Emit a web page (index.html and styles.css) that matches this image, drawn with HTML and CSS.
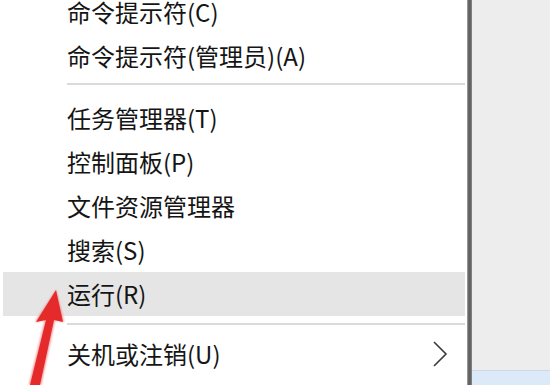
FILE: index.html
```html
<!DOCTYPE html>
<html lang="zh-CN">
<head>
<meta charset="utf-8">
<title>Win+X 菜单</title>
<link rel="stylesheet" href="styles.css">
</head>
<body>
<div class="screen">
  <div class="menu">
    <ul class="list">
      <li class="item item-first">命令提示符(C)</li>
      <li class="item">命令提示符(管理员)(A)</li>
      <li class="sep sep-first"></li>
      <li class="item">任务管理器(T)</li>
      <li class="item">控制面板(P)</li>
      <li class="item">文件资源管理器</li>
      <li class="item">搜索(S)</li>
      <li class="item active">运行(R)</li>
      <li class="sep sep-last"></li>
      <li class="item has-sub">关机或注销(U)
        <svg class="chev" width="16" height="28" viewBox="0 0 16 28"><path d="M2 2 L14 14 L2 26" fill="none" stroke="#3a3a3a" stroke-width="1.6"/></svg>
      </li>
    </ul>
  </div>
  <div class="edge"></div>
  <div class="desk">
    <div class="desk-fill"></div>
    <div class="desk-bar"></div>
  </div>
  <svg class="arrow" width="80" height="125" viewBox="0 0 80 125">
    <defs>
      <filter id="glow" x="-30%" y="-30%" width="160%" height="160%">
        <feGaussianBlur stdDeviation="1.2"/>
      </filter>
    </defs>
    <polygon points="56,30 64,62 55,60 41,125 29,125 45,60 35,62" fill="#f05a5a" filter="url(#glow)" opacity="0.7"/>
    <polygon points="56,30 63,62 54,60 40,125 30,125 46,60 36,62" fill="#e42a2a"/>
  </svg>
</div>
</body>
</html>
```
FILE: styles.css
```css
html, body {
  margin: 0;
  padding: 0;
  background: #ffffff;
}
.screen {
  position: relative;
  width: 550px;
  height: 385px;
  overflow: hidden;
  display: flex;
  font-family: "Noto Sans CJK SC", "Microsoft YaHei", sans-serif;
}
.menu {
  width: 467px;
  background: #ffffff;
  flex: none;
}
.list {
  list-style: none;
  margin: 0 2px 0 3px;
  padding: 0;
}
.item {
  height: 44px;
  line-height: 44px;
  padding-left: 64px;
  font-size: 24px;
  color: #151515;
  display: flex;
  align-items: center;
  white-space: nowrap;
}
.item-first {
  height: 24px;
  line-height: 24px;
  margin-bottom: 10px;
}
.item.active {
  background: #e5e5e5;
}
.has-sub {
  justify-content: space-between;
  padding-right: 17px;
}
.chev {
  display: block;
}
.sep {
  height: 2px;
  background: #dadada;
}
.sep-first {
  margin: 5px 0 11px 64px;
}
.sep-last {
  margin: 7px 0 7px 64px;
}
.edge {
  width: 5px;
  flex: none;
  background: linear-gradient(to right, #a8a8a8 0, #6a6a6a 30%, #5a5a5a 60%, #8c8c8c 100%);
}
.desk {
  flex: 1;
  display: flex;
  flex-direction: column;
  background: #ededed;
}
.desk-fill {
  flex: 1;
  background: #ededed;
}
.desk-bar {
  height: 14px;
  background: #dbe9f8;
  border-top: 1px solid #c9d9ea;
}
.arrow {
  position: absolute;
  left: 0;
  top: 260px;
}
```
